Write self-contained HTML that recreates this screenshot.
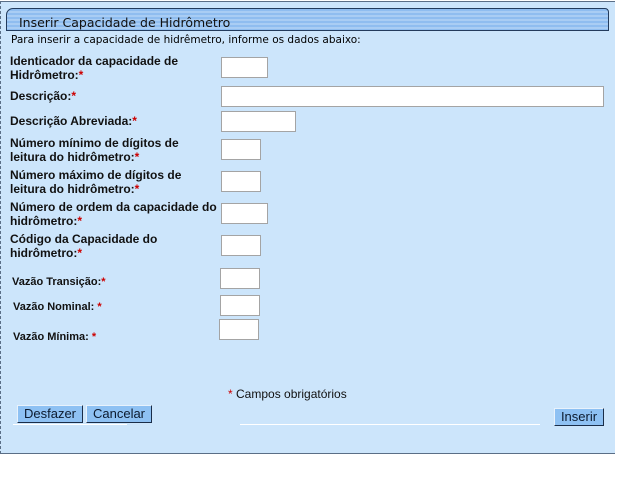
<!DOCTYPE html>
<html><head><meta charset="utf-8"><style>
body{margin:0;width:638px;height:477px;background:#fff;position:relative;font-family:"Liberation Sans",Arial,sans-serif;overflow:hidden}
.panel{position:absolute;left:0;top:1px;width:614px;height:451px;background:#cce5fb;border-top:1px solid #5a6e86;border-left:1px dashed #5a6e86;border-bottom:1px solid #5a6e86}
.hdr{position:absolute;left:6px;top:8px;width:603px;height:23px;border:1px solid #233b5c;border-radius:7px 4px 0 0;background:repeating-linear-gradient(180deg,#8fbdf0 0,#8fbdf0 2px,#a9cdf4 2px,#a9cdf4 4px);font-family:"DejaVu Sans",sans-serif;font-size:12.5px;color:#111;line-height:27px;padding-left:12px;box-sizing:border-box}
.sub{position:absolute;left:11px;top:34px;font-family:"DejaVu Sans",sans-serif;font-size:10.5px;color:#000}
.l{position:absolute;font-size:12px;font-weight:bold;color:#111;line-height:14px}
.l i{color:#c00;font-style:normal}
.in{position:absolute;background:#fff;border:1px solid #a4a4a4;box-sizing:border-box;height:21px}
.btn{position:absolute;background:#8ec1f3;border:1px solid #1a2d48;border-top-color:#e8f2fc;border-left-color:#e8f2fc;font-size:13px;color:#0c1a2e;height:18px;line-height:16px;text-align:center;box-sizing:border-box}
</style></head><body>
<div class="panel"></div>
<div class="hdr">Inserir Capacidade de Hidrômetro</div>
<div class="sub">Para inserir a capacidade de hidrêmetro, informe os dados abaixo:</div>
<div class="l" style="left:10px;top:54px">Identicador da capacidade de<br>Hidrômetro:<i>*</i></div>
<div class="in" style="left:221px;top:57px;width:47px"></div>
<div class="l" style="left:10px;top:89px">Descrição:<i>*</i></div>
<div class="in" style="left:221px;top:86px;width:383px"></div>
<div class="l" style="left:10px;top:114px">Descrição Abreviada:<i>*</i></div>
<div class="in" style="left:221px;top:111px;width:75px"></div>
<div class="l" style="left:10px;top:136px">Número mínimo de dígitos de<br>leitura do hidrômetro:<i>*</i></div>
<div class="in" style="left:221px;top:139px;width:40px"></div>
<div class="l" style="left:10px;top:168px">Número máximo de dígitos de<br>leitura do hidrômetro:<i>*</i></div>
<div class="in" style="left:221px;top:171px;width:40px"></div>
<div class="l" style="left:10px;top:200px">Número de ordem da capacidade do<br>hidrômetro:<i>*</i></div>
<div class="in" style="left:221px;top:203px;width:47px"></div>
<div class="l" style="left:10px;top:232px">Código da Capacidade do<br>hidrômetro:<i>*</i></div>
<div class="in" style="left:221px;top:235px;width:40px"></div>
<div class="l" style="left:12px;top:275px;font-size:11px">Vazão Transição:<i>*</i></div>
<div class="in" style="left:220px;top:268px;width:40px"></div>
<div class="l" style="left:13px;top:300px;font-size:11px">Vazão Nominal: <i>*</i></div>
<div class="in" style="left:220px;top:295px;width:40px"></div>
<div class="l" style="left:13px;top:330px;font-size:11px">Vazão Mínima: <i>*</i></div>
<div class="in" style="left:219px;top:319px;width:40px"></div>
<div style="position:absolute;left:228px;top:387px;font-size:12px;color:#111"><span style="color:#c00">*</span> Campos obrigatórios</div>
<div style="position:absolute;left:13px;top:424px;width:114px;height:1px;background:#fff"></div>
<div style="position:absolute;left:240px;top:424px;width:300px;height:1px;background:#fff"></div>
<div class="btn" style="left:17px;top:405px;width:66px">Desfazer</div>
<div class="btn" style="left:86px;top:405px;width:66px">Cancelar</div>
<div class="btn" style="left:554px;top:408px;width:50px">Inserir</div>
</body></html>
